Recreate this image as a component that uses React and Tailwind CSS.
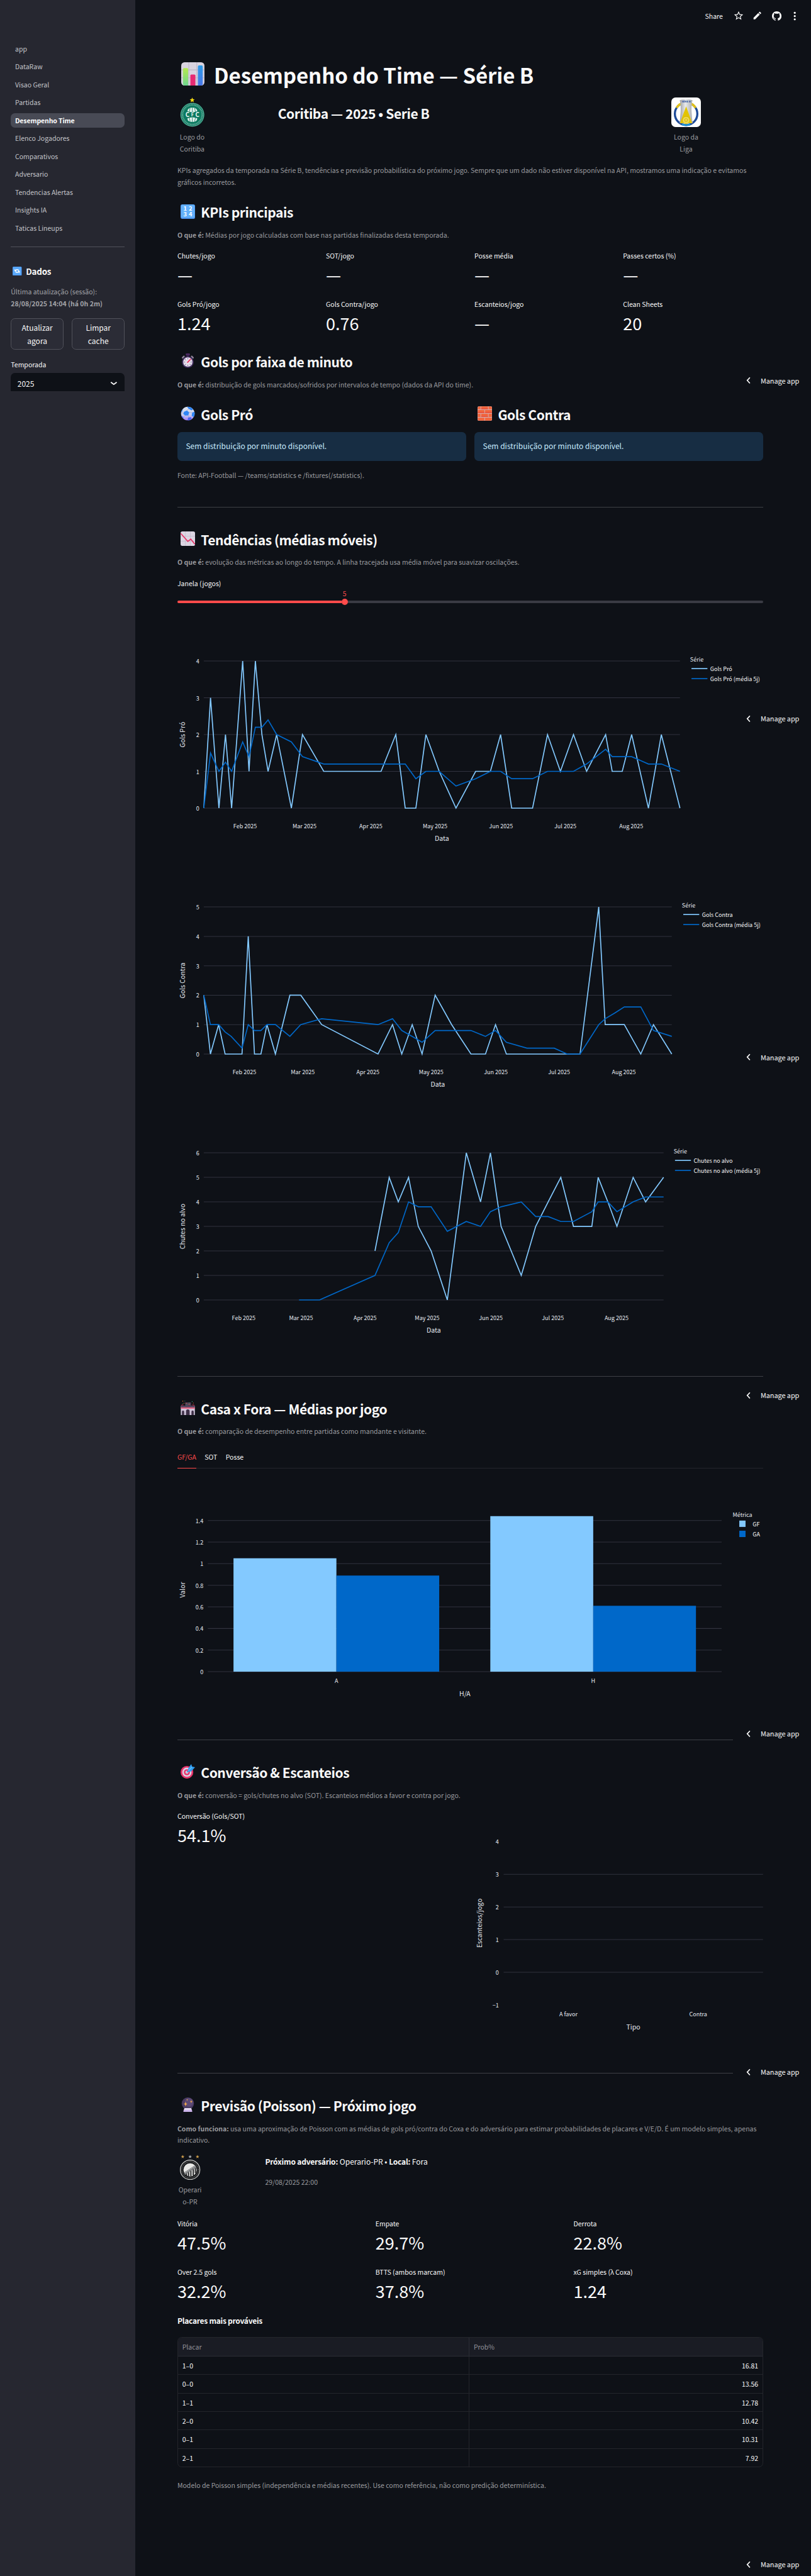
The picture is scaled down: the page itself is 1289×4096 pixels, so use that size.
import React from "react";

const SERIES_X = [85, 101.5, 122, 138, 153, 180, 195.5, 211, 227, 242, 263, 299, 326, 378, 518, 554, 577, 603, 627.5, 660, 701, 749, 785, 810, 837, 888, 924.5, 956, 988, 1020, 1066.5, 1082.5, 1107, 1130, 1171, 1202.5, 1248].map((v) => (v - 85) / 1163);
const GOALS_FOR = [0, 3, 0, 2, 0, 4, 1, 4, 2, 1, 2, 0, 2, 1, 1, 2, 0, 0, 2, 1, 0, 1, 1, 2, 0, 0, 2, 1, 2, 1, 2, 1, 1, 2, 0, 2, 0];
const GOALS_AGAINST = [2, 0, 1, 0, 0, 0, 4, 0, 0, 1, 0, 2, 2, 1, 0, 1, 0, 1, 0, 2, 1, 0, 0, 1, 0, 0, 0, 0, 0, 0, 5, 1, 1, 1, 0, 1, 0];
const _ = null;
const SHOTS = [_, _, _, _, _, _, _, _, _, _, _, _, 0, _, 2, 5, 4, 5, 3, 2, 0, 6, 4, 6, 3, 1, 3, 4, 5, 3, 3, 5, 4, 3, 5, 4, 5];
const MONTHS = [
  ["Feb 2025", 0.0868], ["Mar 2025", 0.2115], ["Apr 2025", 0.3508], ["May 2025", 0.4858],
  ["Jun 2025", 0.6242], ["Jul 2025", 0.7592], ["Aug 2025", 0.8977],
];

function rolling(values, n) {
  return values.map((_v, i) => {
    const w = values.slice(Math.max(0, i - n + 1), i + 1).filter((v) => v !== null);
    return w.length ? w.reduce((a, b) => a + b, 0) / w.length : null;
  });
}

function toPath(values, px, py) {
  let d = "";
  let pen = false;
  values.forEach((v, i) => {
    if (v === null) {
      pen = false;
      return;
    }
    d += (pen ? "L" : "M") + px(SERIES_X[i]).toFixed(2) + " " + py(v).toFixed(2);
    pen = true;
  });
  return d;
}

const GRID = "#31333f";
const INK = "#e6eaf1";

function LineChart({ values, max, right, name, legendX }) {
  const top = 75.2;
  const h = 278.7;
  const left = 49.9;
  const px = (f) => left + f * (right - left);
  const py = (v) => top + h * (1 - v / max);
  const lx = legendX;
  return (
    <svg className="block h-[450px] w-full" viewBox="0 0 1109.3 450" fill={INK} fontSize="10.75">
      {Array.from({ length: max + 1 }, (_v, i) => (
        <g key={i}>
          <line x1={left} x2={right} y1={py(i)} y2={py(i)} stroke={GRID} strokeWidth="1.2" />
          <text x="41.4" y={py(i) + 4.8} textAnchor="end">{i}</text>
        </g>
      ))}
      {MONTHS.map(([m, f]) => (
        <text key={m} x={px(f)} y={top + 316.6} textAnchor="middle">{m}</text>
      ))}
      <text x={px(0.5)} y={top + 341} textAnchor="middle" fontSize="12.54">Data</text>
      <text transform={`translate(14 ${top + 139.4}) rotate(-90)`} textAnchor="middle" fontSize="12.54">{name}</text>
      <path d={toPath(values, px, py)} fill="none" stroke="#83c9ff" strokeWidth="2" />
      <path d={toPath(rolling(values, 5), px, py)} fill="none" stroke="#0068c9" strokeWidth="2" />
      <text x={lx} y={top + 1.1}>Série</text>
      <line x1={lx + 2.6} x2={lx + 32.8} y1={top + 14.3} y2={top + 14.3} stroke="#83c9ff" strokeWidth="2" />
      <line x1={lx + 2.6} x2={lx + 32.8} y1={top + 33.3} y2={top + 33.3} stroke="#0068c9" strokeWidth="2" />
      <g fill="#fafafa">
        <text x={lx + 38} y={top + 19.2}>{name}</text>
        <text x={lx + 38} y={top + 38.2}>{name} (média 5j)</text>
      </g>
    </svg>
  );
}

function BarChart() {
  const y0 = 369.5;
  const u = 204.66;
  const bars = [
    [106.2, 194.9, 1.05, "#83c9ff"], [301.1, 194.7, 0.89, "#0068c9"],
    [592.6, 194.9, 1.44, "#83c9ff"], [787.5, 194.6, 0.61, "#0068c9"],
  ];
  return (
    <svg className="block h-[450px] w-full" viewBox="0 0 1109.3 450" fill={INK} fontSize="10.75">
      {["0", "0.2", "0.4", "0.6", "0.8", "1", "1.2", "1.4"].map((t) => (
        <g key={t}>
          <line x1="57.5" x2="1030.7" y1={y0 - t * u} y2={y0 - t * u} stroke={GRID} strokeWidth="1.2" />
          <text x="49.3" y={y0 - t * u + 4.8} textAnchor="end">{t}</text>
        </g>
      ))}
      {bars.map(([x, w, v, c]) => (
        <rect key={x} x={x} y={y0 - v * u} width={w} height={v * u} fill={c} />
      ))}
      <text x="301.1" y="391.2" textAnchor="middle">A</text>
      <text x="787.5" y="391.2" textAnchor="middle">H</text>
      <text x="544.4" y="416.3" textAnchor="middle" fontSize="12.54">H/A</text>
      <text transform="translate(14 214.5) rotate(-90)" textAnchor="middle" fontSize="12.54">Valor</text>
      <text x="1051.6" y="76">Métrica</text>
      <rect x="1064.2" y="83.2" width="11.8" height="12" fill="#83c9ff" />
      <rect x="1064.2" y="102.4" width="11.8" height="12" fill="#0068c9" />
      <g fill="#fafafa">
        <text x="1089.6" y="94.5">GF</text>
        <text x="1089.6" y="113.8">GA</text>
      </g>
    </svg>
  );
}

function CornersChart() {
  return (
    <svg className="block h-[452px] w-full" viewBox="0 0 546.7 452" fill={INK} fontSize="10.75">
      {["4", "3", "2", "1", "0", "−1"].map((t, i) => (
        <g key={t}>
          {i > 0 && i < 5 && <line x1="55.4" x2="546.7" y1={61.2 + i * 61.87} y2={61.2 + i * 61.87} stroke={GRID} strokeWidth="1.2" />}
          <text x="46.2" y={65.9 + i * 61.9} textAnchor="end">{t}</text>
        </g>
      ))}
      <text x="178.2" y="392.4" textAnchor="middle">A favor</text>
      <text x="423.9" y="392.4" textAnchor="middle">Contra</text>
      <text x="301" y="417.1" textAnchor="middle" fontSize="12.54">Tipo</text>
      <text transform="translate(14.5 215.6) rotate(-90)" textAnchor="middle" fontSize="12.54">Escanteios/jogo</text>
    </svg>
  );
}

/* ---------- emoji drawings, 32 x 32 grid ---------- */

const ChartIcon = ({ className }) => (
  <svg className={className} viewBox="0 0 32 32">
    <rect width="32" height="32" rx="4.5" fill="#d9d3df" />
    <path d="M10.5 0v32M21.5 0v32M0 10.5h32M0 21.5h32" stroke="#bdb6c6" strokeWidth=".9" />
    <defs>
      <linearGradient id="bg" x2="0" y2="1"><stop stopColor="#b4e84f" /><stop offset="1" stopColor="#6ed68e" /></linearGradient>
      <linearGradient id="bb" x2="0" y2="1"><stop stopColor="#2c9be8" /><stop offset="1" stopColor="#4a77e8" /></linearGradient>
    </defs>
    <path d="M2.4 9.5Q2.4 8 4 8h4q1.6 0 1.6 1.5V32H4.5Q2.4 32 2.4 30z" fill="url(#bg)" />
    <path d="M12.6 18.5q0-1.5 1.5-1.5h4q1.5 0 1.5 1.5V32h-7z" fill="#e72a72" />
    <path d="M23 6q0-1.6 1.5-1.6h3.7q1.5 0 1.5 1.6v24.5q-.5 1.5-2 1.5H23z" fill="url(#bb)" />
  </svg>
);

const NumbersIcon = ({ className }) => (
  <svg className={className} viewBox="0 0 32 32">
    <rect width="32" height="32" rx="4" fill="#4e93f0" />
    <rect x="1" y="0.5" width="30" height="29" rx="3.5" fill="#62b0fb" />
    <g fill="#fff" fontSize="13" fontWeight="700" textAnchor="middle">
      <text x="10" y="14">1</text><text x="21.5" y="14">2</text>
      <text x="10" y="27">3</text><text x="21.5" y="27">4</text>
    </g>
  </svg>
);

const StopwatchIcon = ({ className }) => (
  <svg className={className} viewBox="0 0 32 32">
    <rect x="11.5" y="0" width="9" height="5" rx="1.5" fill="#4b2a63" />
    <rect x="14" y="3" width="4" height="5" fill="#3a204e" />
    <path d="M4.5 9.5l3-3M27.5 9.5l-3-3" stroke="#8d8299" strokeWidth="3.4" strokeLinecap="round" />
    <circle cx="16" cy="19" r="12.8" fill="#4a3568" />
    <circle cx="16" cy="19" r="10.2" fill="#e6dfec" />
    <path d="M16 10.5v2.5M16 25v2.5M7.5 19H10M22 19h2.5M10 13l1.6 1.6M20.4 23.4L22 25M10 25l1.6-1.6" stroke="#7d6f92" strokeWidth="1.5" />
    <path d="M15.5 19.5l6.3-6.6" stroke="#f0315f" strokeWidth="2.4" strokeLinecap="round" />
  </svg>
);

const BallIcon = ({ className }) => (
  <svg className={className} viewBox="0 0 32 32">
    <defs>
      <linearGradient id="bl" x2="0" y2="1"><stop stopColor="#dfe6ee" /><stop offset=".6" stopColor="#c6cdf0" /><stop offset="1" stopColor="#a27cf5" /></linearGradient>
      <clipPath id="bc"><circle cx="16" cy="16" r="15" /></clipPath>
    </defs>
    <circle cx="16" cy="16" r="15" fill="url(#bl)" />
    <g fill="#2f86f6" clipPath="url(#bc)">
      <path d="M7.5 12l6.500-2.500 5 4-2 6.500-7 .5-4-4z" />
      <path d="M15 0l9 2 4 5-4 2-6-3-3-4zM25.5 14l5-2 3 6-4 6-5-3z" />
      <path d="M16.5 25l6-1 2 3-4 5h-5zM1 20l5 4 1 4-4 1-4-5z" fill="#4a63f2" />
      <path d="M0 12l3-6 2 1-2 6z" />
    </g>
    <path d="M13.500 9.500L18 6M19 13.500l6.500.5M17 20l.5 5M10 20.500L6 24M6 16L2 13" stroke="#9aa6cc" strokeWidth="1" />
  </svg>
);

const BrickIcon = ({ className }) => (
  <svg className={className} viewBox="0 0 32 32">
    <rect width="32" height="32" rx="3" fill="#d8a7a3" />
    <g fill="#f2653c">
      <path d="M3 .5h3.500v6h-6V3zM8 .5h15v6H8zM24.5 .5H29q2.500 0 2.500 2.500v3.500h-7z" />
      <path d="M.5 8.300h14.500v6.700H.5zM16.500 8.300h15v6.700h-15z" />
      <path d="M.5 16.800h6v6.700h-6zM8 16.800h15v6.700H8zM24.500 16.800h7v6.700h-7z" />
      <path d="M.5 25.300H15v6.200H3Q.5 31.500 .5 29zM16.500 25.300h15V29q0 2.500-2.500 2.500H16.500z" />
    </g>
    <path d="M8 4.500h15v2H8zM.5 13h14.500v2H.5zM16.500 13h15v2h-15zM8 21.500h15v2H8z" fill="#e6503f" />
  </svg>
);

const TrendDownIcon = ({ className }) => (
  <svg className={className} viewBox="0 0 32 32">
    <rect width="32" height="32" rx="4" fill="#dcd5e2" />
    <path d="M10.5 0v32M21.5 0v32M0 10.5h32M0 21.5h32" stroke="#c0b8ca" strokeWidth=".9" />
    <path d="M.5 4.500L16 22l6.500-5L31.500 28" fill="none" stroke="#e62e62" strokeWidth="2.3" />
  </svg>
);

const StadiumIcon = ({ className }) => (
  <svg className={className} viewBox="0 0 32 32">
    <rect x="10" y="4" width="13" height="7" fill="#4b3d55" />
    <path d="M11.5 6h3M17 8.500h4" stroke="#d35b4b" strokeWidth="1.2" />
    <path d="M13 9.500h2M18 5.500h2" stroke="#46a877" strokeWidth="1.2" />
    <path d="M2.5 15V9.500h4M29.500 15V9.500h-4M7 15v-4M25 15v-4" fill="none" stroke="#c5304f" strokeWidth="1.3" />
    <rect x="0.5" y="12" width="31" height="20" fill="#cfc4da" />
    <rect x="0.5" y="11.5" width="31" height="3.5" fill="#51405c" />
    <rect x="0.5" y="15.5" width="31" height="2" fill="#ec3b5c" />
    <path d="M3 32v-7a2.500 3 0 0 1 5 0v7zM12 32v-8a4 4.500 0 0 1 8 0v8zM24 32v-7a2.500 3 0 0 1 5 0v7z" fill="#3f3048" />
    <path d="M4.500 2l1-1.500M7 6.500l1-1M27.500 5l1 1" stroke="#ef8a3a" strokeWidth="1.4" />
    <path d="M25 2.500l1-1M4 6.500h1M9 1h1" stroke="#3fb98c" strokeWidth="1.4" />
  </svg>
);

const TargetIcon = ({ className }) => (
  <svg className={className} viewBox="0 0 32 32">
    <circle cx="14" cy="18" r="14" fill="#e8366d" />
    <circle cx="14" cy="18" r="10.2" fill="#dcd3e6" />
    <circle cx="14" cy="18" r="6.7" fill="#e8366d" />
    <circle cx="14" cy="18" r="3.3" fill="#dcd3e6" />
    <path d="M14 18l6-6" stroke="#2578c9" strokeWidth="1.8" />
    <path d="M16 15.500l1-6L23.500 0l2 5.500 6.500 1.500-8.500 9-6 1.500z" fill="#2f9df0" />
    <path d="M17 15l8-8.500" stroke="#77c7fb" strokeWidth="1.5" />
  </svg>
);

const CrystalIcon = ({ className }) => (
  <svg className={className} viewBox="0 0 32 32">
    <circle cx="16" cy="13.5" r="13.5" fill="#4b3c63" />
    <circle cx="18.5" cy="11" r="9.5" fill="#5c4a76" />
    <path d="M8.500 24h15l2.500 7q-.5 1-2 1H8q-1.500 0-2-1z" fill="#cdb5ec" />
    <path d="M8.500 24h15l1 3h-17z" fill="#efe7f6" />
    <path d="M11 9.500l1.300 4 3 1-3 1.200L11 20l-1.300-4.300-3-1.200 3-1zM23.500 6l.9 2.600 2.200.7-2.200.8-.9 2.900-.9-2.900-2.200-.8 2.200-.7zM14.500 3.500l.6 1.500 1.300.5-1.300.5-.6 1.700-.6-1.700-1.300-.5 1.300-.5z" fill="#fbb04a" />
  </svg>
);

const RefreshIcon = ({ className }) => (
  <svg className={className} viewBox="0 0 32 32">
    <rect width="32" height="32" rx="3.5" fill="#4287ee" />
    <rect x="1" y=".5" width="30" height="29" rx="3" fill="#5aa9fa" />
    <path d="M9.500 13.500q1.500-3 6.500-3 4 0 6 3.500M22.500 17.500q-1.500 3-6.500 3-4 0-6-3.500" fill="none" stroke="#fff" strokeWidth="3" />
    <path d="M7 8v8h7.500zM25 23v-8h-7.500z" fill="#fff" />
  </svg>
);

const CoritibaLogo = () => (
  <svg className="block size-[56px]" viewBox="0 0 56 56" aria-label="Logo do Coritiba">
    <path d="M28 0l1.300 3.200 3.400.3-2.600 2.200.8 3.400L28 7.200l-2.900 1.900.8-3.400-2.600-2.200 3.400-.3z" fill="#ffe010" />
    <circle cx="28.300" cy="32.700" r="22.700" fill="#0d7a60" />
    <circle cx="28.300" cy="32.700" r="21.700" fill="none" stroke="#9fcdc0" strokeWidth=".8" />
    <circle cx="28.300" cy="32.700" r="18.600" fill="none" stroke="#86bfb0" strokeWidth="3" strokeDasharray="1.700 1.200" opacity=".75" />
    <circle cx="28.300" cy="32.700" r="15" fill="#0d7a60" />
    <path d="M19 26q0-6.500 9.300-7 9.300.5 9.300 7-4 2-9.300 2t-9.300-2zM19 39.500q4-2 9.300-2t9.300 2q0 6.500-9.300 7-9.300-.5-9.300-7z" fill="#e4f2ee" />
    <path d="M28.300 19v9M24 20l-1.500 7.500M32.600 20l1.500 7.500M28.300 38v8.500M24 45.500L22.500 38M32.600 45.500l1.500-7.500" stroke="#0d7a60" strokeWidth="1" />
    <g fill="#eef8f5" fontWeight="700" textAnchor="middle">
      <text x="19" y="37" fontSize="11.5">C</text>
      <text x="28.300" y="36" fontSize="8.5">F</text>
      <text x="37.600" y="37" fontSize="11.5">C</text>
    </g>
  </svg>
);

const LeagueLogo = () => (
  <svg className="block size-[56px]" viewBox="0 0 56 56" aria-label="Logo da Liga">
    <rect width="56" height="56" rx="8" fill="#fff" />
    <circle cx="28" cy="31" r="21.300" fill="none" stroke="#1d4a98" strokeWidth="4" />
    <path d="M20 50.700a21.300 21.300 0 0 0 16 0" fill="none" stroke="#1e8fd2" strokeWidth="4" />
    <path d="M10 19.500A21.300 21.300 0 0 1 22 10.500M46 19.500A21.300 21.300 0 0 0 34 10.500" fill="none" stroke="#e2c21b" strokeWidth="4.2" />
    <defs><linearGradient id="cup"><stop stopColor="#9a9da2" /><stop offset=".45" stopColor="#e9eaec" /><stop offset="1" stopColor="#a6a9ad" /></linearGradient></defs>
    <path d="M16 5q12-3.500 24 0-2.500 11-1.500 24 .5 11 2 20H15.500q1.500-9 2-20Q18.500 16 16 5z" fill="url(#cup)" />
    <path d="M28 17q6 16 11.500 31.500H16.500Q22 33 28 17z" fill="#e3c400" />
    <circle cx="28" cy="43" r="7" fill="#f0da4e" stroke="#c9a800" strokeWidth=".8" />
    <path d="M28 39.500l3 2.200-1.100 3.600h-3.800L25 41.700z" fill="none" stroke="#c9a800" strokeWidth=".9" />
    <text x="28" y="9.8" fontSize="4.500" fontWeight="700" textAnchor="middle" fill="#1d4a98">SÉRIE B</text>
  </svg>
);

const OperarioLogo = () => (
  <svg className="block size-[48px]" viewBox="0 0 48 48" aria-label="Operario-PR">
    <path d="M10 .5l.9 2.300 2.400.1-1.900 1.500.7 2.400L10 5.400 7.900 6.800l.7-2.400L6.700 2.900l2.400-.1z" fill="#c99a4a" />
    <path d="M24 .5l.9 2.300 2.400.1-1.900 1.500.7 2.400L24 5.400l-2.100 1.400.7-2.400-1.900-1.500 2.400-.1z" fill="#a9acb0" />
    <path d="M38 .5l.9 2.300 2.400.1-1.900 1.500.7 2.400L38 5.400l-2.100 1.400.7-2.400-1.900-1.500 2.400-.1z" fill="#c99a4a" />
    <circle cx="24" cy="28.800" r="18.500" fill="#18191b" stroke="#d4d4d2" strokeWidth="1.4" />
    <circle cx="24" cy="28.800" r="15.500" fill="none" stroke="#77787a" strokeWidth="1.6" strokeDasharray="1.300 1.500" />
    <circle cx="24" cy="28.800" r="12.500" fill="#e8e8e6" />
    <path d="M17 32v8M21 30v11M25.500 28v13M30 26v13.500M34 24v11" stroke="#1c1d1f" strokeWidth="2.2" />
    <path d="M12.500 34L33.500 20l2.500 4L14 38z" fill="#7d7f81" />
    <path d="M14 34.500L34 21.500" stroke="#e8e8e6" strokeWidth="1" strokeDasharray="2 1.500" />
  </svg>
);

/* ---------- building blocks ---------- */

const caption = "pt-[1.8px] -mb-[1.8px] text-[12.54px] leading-[22.4px] text-[#9a9b9f]";

function Heading({ icon: Icon, children, className = "" }) {
  return (
    <h2 className={`flex h-[33.6px] items-center text-[25.07px] leading-[33.6px] font-bold tracking-[-0.5px] whitespace-nowrap ${className}`}>
      <Icon className="mr-[11.5px] ml-[5.5px] size-[27.5px] shrink-0" />
      <span className="pt-[3px]">{children}</span>
    </h2>
  );
}

function Metric({ label, value }) {
  return (
    <div>
      <div className="h-[22.4px] text-[12.54px] leading-[26px]">{label}</div>
      <div className="h-12 text-[32.24px] leading-[51.6px]">{value}</div>
    </div>
  );
}

const Rule = ({ className }) => <hr className={`border-0 border-t border-[#3e4045] ${className}`} />;

const NAV = ["app", "DataRaw", "Visao Geral", "Partidas", "Desempenho Time", "Elenco Jogadores", "Comparativos", "Adversario", "Tendencias Alertas", "Insights IA", "Taticas Lineups"];

function Sidebar() {
  return (
    <aside className="w-[256px] shrink-0 bg-[#262730] pt-[78.5px] pr-5 pl-[20.6px]">
      <nav className="flex flex-col gap-[6px]">
        {NAV.map((n) => (
          <a
            key={n}
            className={
              n === "Desempenho Time"
                ? "h-[27.94px] rounded-lg bg-[#484a55] px-2 text-[12.54px] leading-[28px] font-bold tracking-[-0.15px] text-white"
                : "h-[27.94px] px-2 text-[12.54px] leading-[28px] text-[#c3c4c9]"
            }
          >
            {n}
          </a>
        ))}
      </nav>
      <hr className="mt-[21.5px] border-0 border-t border-[#51525b]" />
      <h3 className="mt-[32px] flex h-[26px] items-center text-[16px] leading-[26px] font-bold tracking-[-0.3px]">
        <RefreshIcon className="mr-[8px] ml-[3.3px] size-[17.3px]" />
        <span className="pt-[2px]">Dados</span>
      </h3>
      <div className="mt-[16.3px] text-[12.54px] leading-[22.4px] text-[#a2a3a8]">
        Última atualização (sessão):
        <br />
        <b>28/08/2025 14:04 (há 0h 2m)</b>
      </div>
      <div className="mt-[15.2px] flex gap-4">
        {["Atualizar agora", "Limpar cache"].map((b) => (
          <button key={b} className="h-[60.5px] flex-1 rounded-lg border border-[#50515a] bg-[#2b2c36] px-3 text-[14.33px] leading-[25.6px]">
            {b}
          </button>
        ))}
      </div>
      <div className="mt-[15px] h-[22.4px] text-[12.54px] leading-[26px]">Temporada</div>
      <div className="mt-[6px] flex h-[35.3px] items-center justify-between rounded-t-lg bg-[#0e1117] pr-[13.5px] pl-[12.5px]">
        <span className="pt-[4px] text-[14.33px] leading-[30px]">2025</span>
        <svg className="mt-1 h-[9px] w-[14px]" viewBox="0 0 14 9">
          <path d="M1.500 2l5.500 4.200L12.500 2" fill="none" stroke="#fafafa" strokeWidth="2.2" />
        </svg>
      </div>
    </aside>
  );
}

function Toolbar() {
  return (
    <div className="absolute top-[18px] right-[26px] flex h-6 items-center text-[12.54px]">
      <span className="mr-[20px] pt-[1.5px] leading-[22px]">Share</span>
      <svg className="mr-[18px] size-[19px]" viewBox="1 1 22 22" fill="#fafafa">
        <path d="M22 9.240l-7.190-.620L12 2 9.190 8.630 2 9.240l5.460 4.730L5.820 21 12 17.270 18.180 21l-1.630-7.030L22 9.240zM12 15.400l-3.760 2.270 1-4.280-3.320-2.880 4.380-.380L12 6.100l1.710 4.040 4.380.380-3.320 2.880 1 4.280L12 15.400z" />
      </svg>
      <svg className="mr-[20px] size-[16px]" viewBox="2 2 20 20" fill="#fafafa">
        <path d="M3 17.250V21h3.750L17.810 9.940l-3.750-3.750L3 17.250zM20.710 7.040a1 1 0 0 0 0-1.410l-2.340-2.340a1 1 0 0 0-1.410 0l-1.830 1.830 3.750 3.750 1.830-1.830z" />
      </svg>
      <svg className="mr-[20px] size-[18px]" viewBox="0 0 16 16" fill="#fafafa">
        <path d="M8 0C3.580 0 0 3.580 0 8c0 3.540 2.290 6.530 5.470 7.590.4.070.55-.17.55-.38 0-.19-.01-.82-.01-1.490-2.010.37-2.530-.49-2.690-.94-.09-.23-.48-.94-.82-1.130-.28-.15-.68-.52-.01-.53.63-.01 1.080.58 1.230.82.72 1.210 1.870.87 2.330.66.07-.52.28-.87.51-1.070-1.780-.2-3.640-.89-3.640-3.950 0-.87.31-1.590.82-2.150-.08-.2-.36-1.020.08-2.120 0 0 .67-.21 2.200.82.64-.18 1.320-.27 2-.27s1.360.09 2 .27c1.530-1.040 2.200-.82 2.200-.82.44 1.100.16 1.920.08 2.120.51.56.82 1.270.82 2.150 0 3.070-1.870 3.750-3.650 3.950.29.25.54.73.54 1.480 0 1.070-.01 1.930-.01 2.200 0 .21.15.46.55.38A8.010 8.010 0 0 0 16 8c0-4.420-3.580-8-8-8z" />
      </svg>
      <svg className="h-[18px] w-[10px]" viewBox="0 0 10 18" fill="#fafafa">
        <circle cx="5" cy="2.800" r="1.900" /><circle cx="5" cy="9" r="1.900" /><circle cx="5" cy="15.200" r="1.900" />
      </svg>
    </div>
  );
}

const MANAGE = ["top-[702px]", "top-[1343px]", "top-[1984.5px]", "top-[2625px]", "top-[3266px]", "top-[3907px]", "top-[4840px]"];

const TABLE = [["1–0", "16.81"], ["0–0", "13.56"], ["1–1", "12.78"], ["2–0", "10.42"], ["0–1", "10.31"], ["2–1", "7.92"]];

export default function App() {
  return (
    <div className="relative flex h-[4880.5px] w-[1536px] overflow-hidden bg-[#0e1117] font-['Noto_Sans_CJK_JP','Noto_Sans',sans-serif] text-[#fafafa] [zoom:0.83919]">
      <Sidebar />
      <main className="ml-[80px] w-[1109.3px] pt-[113.4px]">
        <h1 className="flex h-[52.8px] items-center text-[39.4px] leading-[52.8px] font-bold tracking-[-0.12px] whitespace-nowrap">
          <ChartIcon className="mr-[17.5px] ml-[7.8px] size-[44px] shrink-0" />
          <span className="pt-[4px]">Desempenho do Time — Série B</span>
        </h1>

        <div className="mt-[18.8px] flex h-[107.2px]">
          <div className="w-[56px] text-center">
            <CoritibaLogo />
            <div className={`mt-[6.4px] ${caption}`}>Logo do Coritiba</div>
          </div>
          <h3 className="ml-[134.3px] w-[745.2px] pt-[12.5px] text-[25.07px] leading-[33.6px] font-bold tracking-[-0.5px]">Coritiba — 2025 • Serie B</h3>
          <div className="w-[56px] text-center">
            <LeagueLogo />
            <div className={`mt-[6.4px] ${caption}`}>Logo da Liga</div>
          </div>
        </div>

        <p className={`mt-[18.4px] ${caption}`}>
          KPIs agregados da temporada na Série B, tendências e previsão probabilística do próximo jogo. Sempre que um dado não estiver disponível na API, mostramos uma indicação e evitamos
          <br />
          gráficos incorretos.
        </p>

        <Heading icon={NumbersIcon} className="mt-[28.3px]">KPIs principais</Heading>
        <p className={`mt-[15.5px] ${caption}`}><b>O que é:</b> Médias por jogo calculadas com base nas partidas finalizadas desta temporada.</p>
        <div className="mt-[16.7px] grid grid-cols-4 gap-x-4 gap-y-[21.5px]">
          <Metric label="Chutes/jogo" value="—" />
          <Metric label="SOT/jogo" value="—" />
          <Metric label="Posse média" value="—" />
          <Metric label="Passes certos (%)" value="—" />
          <Metric label="Gols Pró/jogo" value="1.24" />
          <Metric label="Gols Contra/jogo" value="0.76" />
          <Metric label="Escanteios/jogo" value="—" />
          <Metric label="Clean Sheets" value="20" />
        </div>

        <Heading icon={StopwatchIcon} className="mt-[32.9px]">Gols por faixa de minuto</Heading>
        <p className={`mt-[16.2px] ${caption}`}><b>O que é:</b> distribuição de gols marcados/sofridos por intervalos de tempo (dados da API do time).</p>
        <div className="mt-[27.8px] grid grid-cols-2 gap-4">
          {[["Gols Pró", BallIcon], ["Gols Contra", BrickIcon]].map(([t, I]) => (
            <div key={t}>
              <Heading icon={I}>{t}</Heading>
              <div className="mt-[17.7px] h-[55.6px] rounded-lg bg-[#172d43] px-4 text-[14.33px] leading-[53px] text-[#c7ebff]">Sem distribuição por minuto disponível.</div>
            </div>
          ))}
        </div>
        <p className={`mt-[15.1px] ${caption}`}>Fonte: API-Football — /teams/statistics e /fixtures(/statistics).</p>
        <Rule className="mt-[49px]" />

        <Heading icon={TrendDownIcon} className="mt-[42.5px]">Tendências (médias móveis)</Heading>
        <p className={`mt-[15.6px] ${caption}`}><b>O que é:</b> evolução das métricas ao longo do tempo. A linha tracejada usa média móvel para suavizar oscilações.</p>
        <div className="mt-[17.2px] h-[22.4px] text-[12.54px] leading-[26px]">Janela (jogos)</div>
        <div className="h-4 w-[633.4px] text-center text-[12.54px] leading-[18px] text-[#ff4b4b]">5</div>
        <div className="mt-[3.7px] flex h-3 items-center">
          <div className="h-[4.5px] w-[310.7px] rounded-l-full bg-[#ff4b4b]" />
          <div className="size-3 rounded-full bg-[#ff4b4b]" />
          <div className="h-[4.5px] flex-1 rounded-r-full bg-[#3a3b44]" />
        </div>

        <div className="mt-[30.8px] flex flex-col gap-4">
          <LineChart values={GOALS_FOR} max={4} right={951.8} name="Gols Pró" legendX={971} />
          <LineChart values={GOALS_AGAINST} max={5} right={936.3} name="Gols Contra" legendX={955.5} />
          <LineChart values={SHOTS} max={6} right={920.8} name="Chutes no alvo" legendX={939.8} />
        </div>
        <Rule className="mt-[48px]" />

        <Heading icon={StadiumIcon} className="mt-[42.5px]">Casa x Fora — Médias por jogo</Heading>
        <p className={`mt-[15.4px] ${caption}`}><b>O que é:</b> comparação de desempenho entre partidas como mandante e visitante.</p>
        <div className="mt-[16.8px] flex h-[42.6px] gap-4 border-b-2 border-[#23252d] text-[12.54px] leading-[42px]">
          <div className="h-[42.6px] border-b-2 border-[#ff4b4b] text-[#ff4b4b]">GF/GA</div>
          <div>SOT</div>
          <div>Posse</div>
        </div>
        <div className="mt-[16.4px]"><BarChart /></div>
        <Rule className="mt-[48px]" />

        <Heading icon={TargetIcon} className="mt-[42.5px]">Conversão &amp; Escanteios</Heading>
        <p className={`mt-[15.6px] ${caption}`}><b>O que é:</b> conversão = gols/chutes no alvo (SOT). Escanteios médios a favor e contra por jogo.</p>
        <div className="mt-[16.8px] grid grid-cols-2 gap-4">
          <Metric label="Conversão (Gols/SOT)" value="54.1%" />
          <CornersChart />
        </div>
        <Rule className="mt-[47.3px]" />

        <Heading icon={CrystalIcon} className="mt-[42.2px]">Previsão (Poisson) — Próximo jogo</Heading>
        <p className={`mt-[16.1px] ${caption}`}>
          <b>Como funciona:</b> usa uma aproximação de Poisson com as médias de gols pró/contra do Coxa e do adversário para estimar probabilidades de placares e V/E/D. É um modelo simples, apenas
          <br />
          indicativo.
        </p>
        <div className="mt-[17px] flex h-[99.6px]">
          <div className="w-[48px] text-center">
            <OperarioLogo />
            <div className={`mt-[6.8px] ${caption}`}>Operari<br />o-PR</div>
          </div>
          <div className="ml-[118.2px]">
            <p className="text-[14.33px] leading-[25.6px]"><b className="tracking-[-0.25px]">Próximo adversário:</b> Operario-PR • <b className="tracking-[-0.25px]">Local:</b> Fora</p>
            <p className={`mt-[14.8px] ${caption}`}>29/08/2025 22:00</p>
          </div>
        </div>
        <div className="mt-[18.3px] grid grid-cols-3 gap-x-4 gap-y-[21.4px]">
          <Metric label="Vitória" value="47.5%" />
          <Metric label="Empate" value="29.7%" />
          <Metric label="Derrota" value="22.8%" />
          <Metric label="Over 2.5 gols" value="32.2%" />
          <Metric label="BTTS (ambos marcam)" value="37.8%" />
          <Metric label="xG simples (λ Coxa)" value="1.24" />
        </div>
        <p className="mt-[22px] text-[14.33px] leading-[25.6px] font-bold tracking-[-0.33px]">Placares mais prováveis</p>

        <div className="mt-[17.4px] h-[247px] overflow-hidden rounded-lg border border-[#23252b] text-[12.54px]">
          <div className="flex h-[36px] border-b border-[#2b2d35] bg-[#1a1c24] leading-[36px] text-[#92939a]">
            <div className="w-[552px] border-r border-[#2b2d35] pl-2">Placar</div>
            <div className="pl-2">Prob%</div>
          </div>
          {TABLE.map(([a, b]) => (
            <div key={a} className="flex h-[35.05px] border-b border-[#23252b] leading-[35px] last:border-b-0">
              <div className="w-[552px] border-r border-[#23252b] pl-2">{a}</div>
              <div className="flex-1 pr-2 text-right">{b}</div>
            </div>
          ))}
        </div>
        <p className={`mt-[22.6px] ${caption}`}>Modelo de Poisson simples (independência e médias recentes). Use como referência, não como predição determinística.</p>
      </main>

      <Toolbar />
      {MANAGE.map((top) => (
        <div key={top} className={`absolute right-0 flex h-[38px] w-[147.3px] items-center bg-[#0e1117] pl-[25px] ${top}`}>
          <svg className="h-[14px] w-[9px]" viewBox="0 0 9 14"><path d="M7 1.500L2 7l5 5.500" fill="none" stroke="#fafafa" strokeWidth="2" /></svg>
          <span className="-mt-px ml-[17.9px] text-[13px] leading-[24px] tracking-[-0.05px] whitespace-nowrap">Manage app</span>
        </div>
      ))}
    </div>
  );
}
